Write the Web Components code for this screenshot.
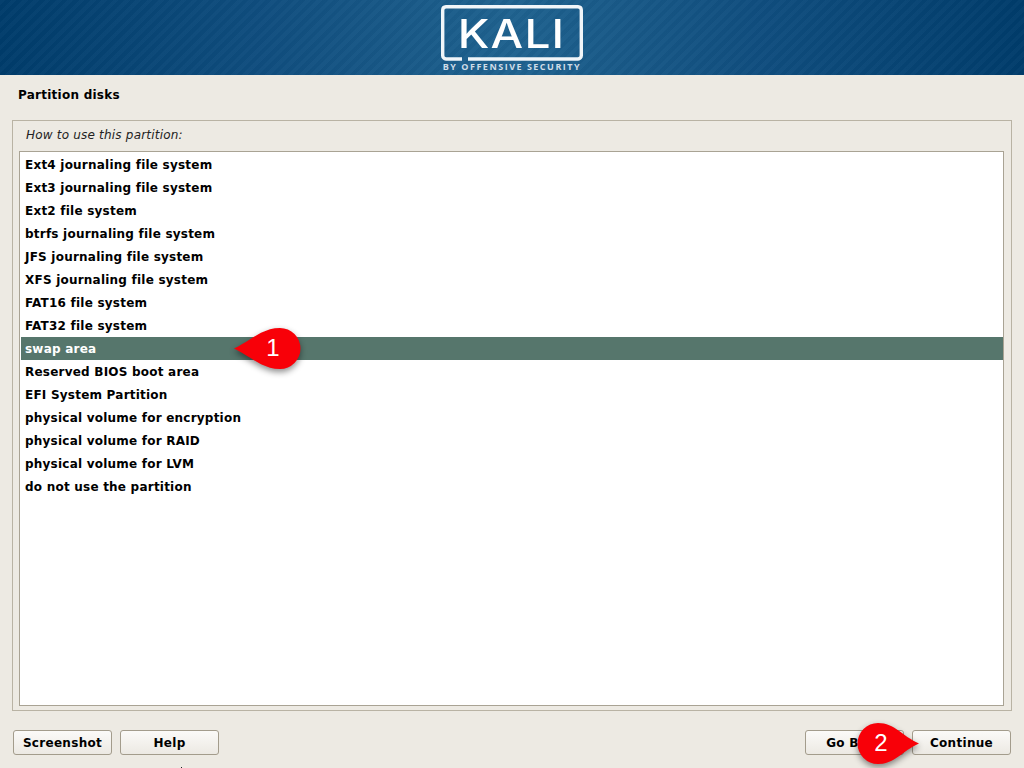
<!DOCTYPE html>
<html>
<head>
<meta charset="utf-8">
<style>
  html, body { margin: 0; padding: 0; }
  body { width: 1024px; height: 768px; overflow: hidden; background: #edeae3; font-family: "DejaVu Sans", sans-serif; color: #000; }
  .speck { position: absolute; left: 181px; top: 767px; width: 1px; height: 1px; background: #222; }
</style>
</head>
<body>
<installer-page>
  <kali-banner slot="banner"></kali-banner>
  <span slot="title">Partition disks</span>
  <choice-frame slot="content" prompt="How to use this partition:">
    <choice-item>Ext4 journaling file system</choice-item>
    <choice-item>Ext3 journaling file system</choice-item>
    <choice-item>Ext2 file system</choice-item>
    <choice-item>btrfs journaling file system</choice-item>
    <choice-item>JFS journaling file system</choice-item>
    <choice-item>XFS journaling file system</choice-item>
    <choice-item>FAT16 file system</choice-item>
    <choice-item>FAT32 file system</choice-item>
    <choice-item selected>swap area</choice-item>
    <choice-item>Reserved BIOS boot area</choice-item>
    <choice-item>EFI System Partition</choice-item>
    <choice-item>physical volume for encryption</choice-item>
    <choice-item>physical volume for RAID</choice-item>
    <choice-item>physical volume for LVM</choice-item>
    <choice-item>do not use the partition</choice-item>
  </choice-frame>
  <gtk-button slot="left">Screenshot</gtk-button>
  <gtk-button slot="left">Help</gtk-button>
  <gtk-button slot="right">Go Back</gtk-button>
  <gtk-button slot="right">Continue</gtk-button>
</installer-page>
<step-callout n="1" dir="left" style="left:230px;top:324px"></step-callout>
<step-callout n="2" dir="right" style="left:852px;top:719px"></step-callout>
<div class="speck"></div>

<script>
class InstallerPage extends HTMLElement {
  constructor() {
    super();
    this.attachShadow({ mode: 'open' });
    this.shadowRoot.innerHTML = `
      <style>
        :host { display: flex; flex-direction: column; width: 1024px; height: 768px; }
        .title { height: 45px; padding: 12px 0 0 18px; box-sizing: border-box; font-size: 12px; font-weight: bold; line-height: 17px; letter-spacing: .25px; }
        .body { padding: 0 12px; height: 591px; }
        .actions { display: flex; justify-content: space-between; padding: 19px 13px 0 13px; }
        .group { display: flex; gap: 8px; }
      </style>
      <slot name="banner"></slot>
      <div class="title"><slot name="title"></slot></div>
      <div class="body"><slot name="content"></slot></div>
      <div class="actions">
        <div class="group"><slot name="left"></slot></div>
        <div class="group"><slot name="right"></slot></div>
      </div>
    `;
  }
}

class KaliBanner extends HTMLElement {
  constructor() {
    super();
    this.attachShadow({ mode: 'open' });
    this.shadowRoot.innerHTML = `
      <style>
        :host { display: flex; justify-content: center; height: 75px; overflow: hidden;
          background:
            repeating-linear-gradient(135deg, rgba(255,255,255,.02) 0 4px, rgba(0,0,0,.02) 4px 8px),
            linear-gradient(90deg, #003c6b 0%, #0f4d7e 25%, #1f628f 50%, #0f4d7e 75%, #003c6b 100%); }
        .logo { width: 142px; height: 75px; color: #fff; display: flex; flex-direction: column; align-items: center; position: relative; }
        svg { position: absolute; left: 0; top: 0; }
        .word { margin-top: 11px; font: 500 39px/46px Inter, sans-serif; letter-spacing: 1px; transform: scaleX(1.18); }
        .by { margin-top: 5px; font: 700 9px/10px "Open Sans", sans-serif; letter-spacing: 1.5px; white-space: nowrap; color: #cfdde8; }
      </style>
      <div class="logo">
        <svg width="142" height="75" fill="none" stroke="#f0f5f9" stroke-width="3.400">
          <path d="M21 59H5A3.500 3.500 0 0 1 1.700 55.500V10A3.500 3.500 0 0 1 5 6.700H137A3.500 3.500 0 0 1 140.300 10V55.500A3.500 3.500 0 0 1 137 59H27"/>
        </svg>
        <div class="word">KALI</div>
        <div class="by">BY OFFENSIVE SECURITY</div>
      </div>
    `;
  }
}

class ChoiceFrame extends HTMLElement {
  constructor() {
    super();
    this.attachShadow({ mode: 'open' });
    this.shadowRoot.innerHTML = `
      <style>
        :host { display: flex; flex-direction: column; height: 591px; box-sizing: border-box; border: 1px solid #b9b3a4; padding: 0 7px 4px 6px; }
        .prompt { height: 30px; padding: 6px 0 0 7px; box-sizing: border-box; font-size: 12px; font-style: italic; line-height: 17px; letter-spacing: .2px; color: #222; }
        .list { flex: 1; background: #fff; border: 1px solid #a9a394; padding: 1px 0 0 1px; }
      </style>
      <div class="prompt"></div>
      <div class="list"><slot></slot></div>
    `;
    this.shadowRoot.querySelector('.prompt').textContent = this.getAttribute('prompt');
  }
}

class ChoiceItem extends HTMLElement {
  constructor() {
    super();
    this.attachShadow({ mode: 'open' });
    this.shadowRoot.innerHTML = `
      <style>
        :host { display: block; height: 23px; padding-left: 4px; font-size: 12px; font-weight: bold; line-height: 25px; letter-spacing: .22px; white-space: nowrap; }
        :host([selected]) { background: #56766c; color: #fff; }
      </style>
      <slot></slot>
    `;
  }
}

class GtkButton extends HTMLElement {
  constructor() {
    super();
    this.attachShadow({ mode: 'open' });
    this.shadowRoot.innerHTML = `
      <style>
        :host { display: flex; align-items: center; justify-content: center; width: 99px; height: 25px; box-sizing: border-box;
          border: 1px solid #a39c8c; border-radius: 3px; background: linear-gradient(#fbfaf8, #ece9e3);
          font-size: 12px; font-weight: bold; letter-spacing: .3px; }
      </style>
      <slot></slot>
    `;
  }
}

class StepCallout extends HTMLElement {
  constructor() {
    super();
    this.attachShadow({ mode: 'open' });
    const left = this.getAttribute('dir') === 'left';
    const d = left
      ? 'M4 24.500C20 17 32 4 50 4A20.500 20.500 0 0 1 50 45C32 45 20 32 4 24.500Z'
      : 'M67 24.500C50 17 43 4 26 4A20.500 20.500 0 0 0 26 45C43 45 50 32 67 24.500Z';
    this.shadowRoot.innerHTML = `
      <style>
        :host { display: block; position: absolute; width: 76px; height: 54px; }
        svg { display: block; filter: drop-shadow(0 3px 3px rgba(0,0,0,.45)); overflow: visible; }
        span { position: absolute; top: 9px; left: ${left ? 36 : 22}px; width: 14px; text-align: center; color: #fff; font: 24px/30px "Liberation Sans", sans-serif; }
      </style>
      <svg width="76" height="54"><path d="${d}" fill="#f80008"/></svg>
      <span></span>
    `;
    this.shadowRoot.querySelector('span').textContent = this.getAttribute('n');
  }
}

customElements.define('installer-page', InstallerPage);
customElements.define('kali-banner', KaliBanner);
customElements.define('choice-frame', ChoiceFrame);
customElements.define('choice-item', ChoiceItem);
customElements.define('gtk-button', GtkButton);
customElements.define('step-callout', StepCallout);
</script>
</body>
</html>
